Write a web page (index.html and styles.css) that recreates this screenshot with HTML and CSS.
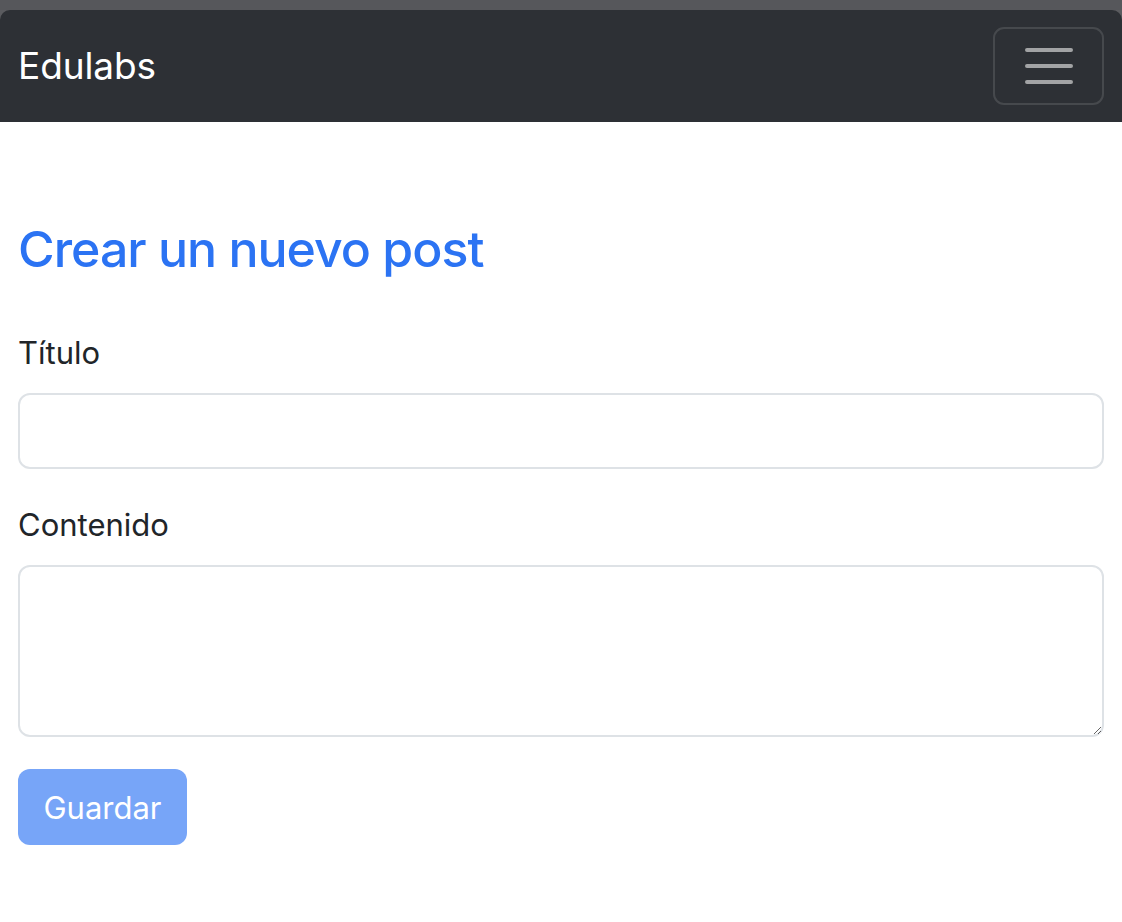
FILE: index.html
```html
<!DOCTYPE html>
<html lang="es">
<head>
<meta charset="utf-8">
<title>Edulabs</title>
<link rel="stylesheet" href="styles.css">
</head>
<body>
<div class="window-strip"></div>
<nav class="navbar">
  <a class="brand" href="#">Edulabs</a>
  <button class="toggler" type="button" aria-label="Menu">
    <svg width="48" height="36" viewBox="0 0 48 36">
      <path d="M2 2H46M2 18H46M2 34H46" stroke="#a2a3a5" stroke-width="4" stroke-linecap="round"/>
    </svg>
  </button>
</nav>
<main class="container">
  <h1 class="title">Crear un nuevo post</h1>
  <form class="form">
    <div class="field">
      <label class="label" for="titulo">Título</label>
      <input class="control input" id="titulo" type="text">
    </div>
    <div class="field">
      <label class="label" for="contenido">Contenido</label>
      <textarea class="control textarea" id="contenido"></textarea>
    </div>
    <div class="actions">
      <button class="btn" type="submit" disabled>Guardar</button>
    </div>
  </form>
</main>
</body>
</html>
```

FILE: styles.css
```css
html, body {
  margin: 0;
  padding: 0;
}
body {
  background: #5a5b5f;
  font-family: Inter, "Noto Sans", sans-serif;
  color: #212529;
}
.window-strip {
  height: 10px;
  background: #56575b;
}
.navbar {
  display: flex;
  align-items: center;
  justify-content: space-between;
  height: 112px;
  box-sizing: border-box;
  padding: 0 18px;
  background: #2d3035;
  border-radius: 10px 10px 0 0;
}
.brand {
  color: #ffffff;
  text-decoration: none;
  font-size: 37px;
  line-height: 1;
  padding-bottom: 2px;
  letter-spacing: -0.1px;
}
.toggler {
  width: 111px;
  height: 78px;
  box-sizing: border-box;
  border: 2px solid rgba(255, 255, 255, 0.12);
  border-radius: 11px;
  background: transparent;
  display: flex;
  align-items: center;
  justify-content: center;
  padding: 0;
}
.toggler svg {
  display: block;
}
.container {
  background: #ffffff;
  min-height: 800px;
  padding: 94px 18px 0 18px;
  box-sizing: border-box;
}
.title {
  margin: 0 0 46px 0;
  font-size: 50px;
  font-weight: 500;
  line-height: 67px;
  color: #2b73f3;
  letter-spacing: -1px;
}
.form {
  display: flex;
  flex-direction: column;
  gap: 32px;
}
.field {
  display: flex;
  flex-direction: column;
  gap: 16px;
}
.label {
  font-size: 31px;
  line-height: 48px;
  color: #212529;
}
.control {
  display: block;
  width: 100%;
  box-sizing: border-box;
  border: 2px solid #dee2e6;
  border-radius: 12px;
  background: #ffffff;
  font-family: inherit;
  font-size: 32px;
  padding: 12px 24px;
  margin: 0;
}
.input {
  height: 76px;
}
.textarea {
  height: 172px;
  resize: vertical;
}
.actions {
  display: flex;
}
.btn {
  width: 169px;
  height: 76px;
  border: none;
  border-radius: 12px;
  background: #77a5f8;
  color: #ffffff;
  font-family: inherit;
  font-size: 31px;
  padding: 0;
}
```
